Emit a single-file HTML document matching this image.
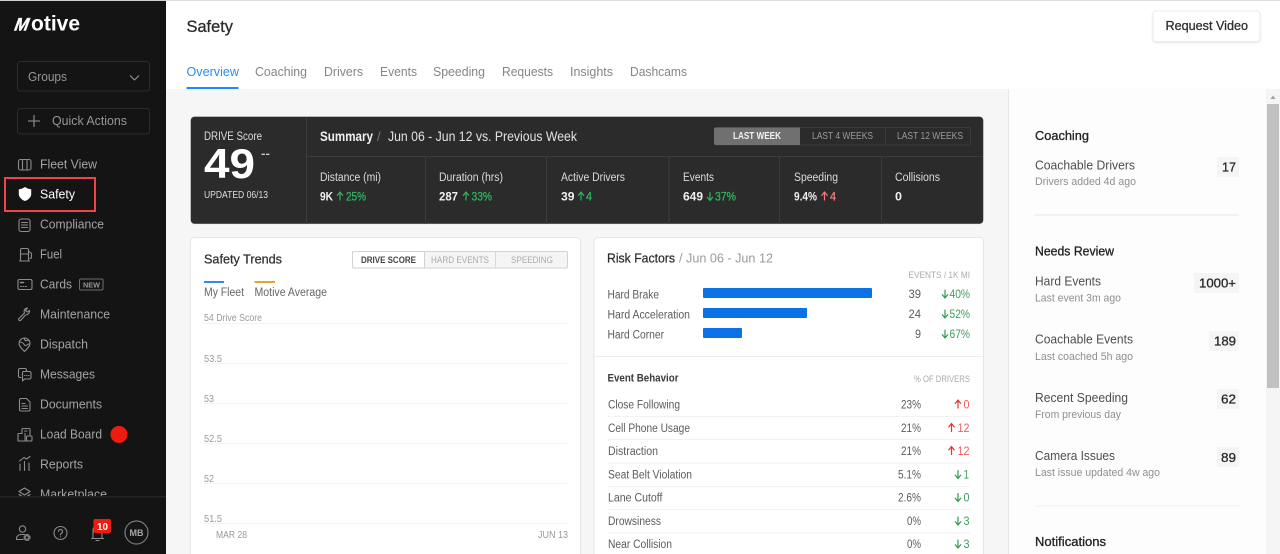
<!DOCTYPE html>
<html lang="en"><head><meta charset="utf-8"><title>Motive Safety</title>
<style>
html,body{margin:0;padding:0;width:1280px;height:554px;overflow:hidden;background:#f6f6f6}
svg{display:block}
text{font-family:"Liberation Sans",sans-serif;white-space:pre}
.n{font-size:13px;fill:#a3a3a3}
.i{fill:none;stroke:#8c8c8c;stroke-width:1.1;stroke-linejoin:round;stroke-linecap:round}
.tab{font-size:13px;fill:#858585}
.lb{font-size:11.5px;fill:#dcdcdc}
.v{font-size:12px;font-weight:bold;fill:#f0f0f0}
.g{font-size:12px;fill:#2db55d;stroke:#2db55d;stroke-width:.3}
.ax{font-size:10.5px;fill:#999}
.r{font-size:11.5px;fill:#5c5c5c}
.num{font-size:11.5px;fill:#5c5c5c}
.pg{font-size:11.5px;fill:#3f9a5c}
.pr{font-size:11.5px;fill:#f25c5c}
.h{font-size:13px;fill:#222;stroke:#222;stroke-width:.3}
.t{font-size:13px;fill:#4d4d4d}
.s{font-size:11px;fill:#8f8f8f}
.b{font-size:13px;fill:#2a2a2a;stroke:#2a2a2a;stroke-width:.3}
.ag{fill:none;stroke:#2f9a50;stroke-width:1.2}
.ar{fill:none;stroke:#ee3030;stroke-width:1.2}
.ad{fill:none;stroke:#2db55d;stroke-width:1.2}
.au{fill:none;stroke:#f47a7a;stroke-width:1.2}
</style></head><body>
<svg xmlns="http://www.w3.org/2000/svg" width="1280" height="554" viewBox="0 0 1280 554">
<defs>
<path id="up" d="M-3 3.2L0-.4L3 3.2M0-.4V8"/>
<path id="dn" d="M-3 4.4L0 8L3 4.4M0 8V-.4"/>
</defs>
<rect width="1280" height="554" fill="#f6f6f6"/>

<!-- header -->
<rect x="166" width="1114" height="89" fill="#fff"/>
<rect width="1280" height="1" fill="#dedede"/>
<text x="186.500" y="32" font-size="17" fill="#2b2b2b" stroke="#2b2b2b" stroke-width=".3" textLength="46.500" lengthAdjust="spacingAndGlyphs">Safety</text>
<text class="tab" x="186.500" y="76" style="fill:#2a8cf0" textLength="52.500" lengthAdjust="spacingAndGlyphs">Overview</text>
<text class="tab" x="255" y="76" textLength="52" lengthAdjust="spacingAndGlyphs">Coaching</text>
<text class="tab" x="324" y="76" textLength="39" lengthAdjust="spacingAndGlyphs">Drivers</text>
<text class="tab" x="380" y="76" textLength="37" lengthAdjust="spacingAndGlyphs">Events</text>
<text class="tab" x="433" y="76" textLength="52" lengthAdjust="spacingAndGlyphs">Speeding</text>
<text class="tab" x="502" y="76" textLength="51" lengthAdjust="spacingAndGlyphs">Requests</text>
<text class="tab" x="570" y="76" textLength="43" lengthAdjust="spacingAndGlyphs">Insights</text>
<text class="tab" x="630" y="76" textLength="57" lengthAdjust="spacingAndGlyphs">Dashcams</text>
<rect x="186.500" y="87" width="52" height="2" fill="#1a8cff"/>
<rect x="1153" y="11" width="107" height="30.500" rx="3" fill="#fff" stroke="#ececec" style="filter:drop-shadow(0 1px 1px rgba(0,0,0,.1))"/>
<text x="1165.500" y="30" font-size="13" fill="#2f2f2f" stroke="#2f2f2f" stroke-width=".3" textLength="82.500" lengthAdjust="spacingAndGlyphs">Request Video</text>

<!-- right panel -->
<rect x="1008" y="89" width="258" height="465" fill="#fdfdfd"/>
<rect x="1008" y="89" width="1" height="465" fill="#e8e8e8"/>
<rect x="1266" y="89" width="14" height="465" fill="#f5f5f5"/>
<rect x="1267" y="104" width="12" height="284" fill="#c1c1c1"/>
<path d="M1270.500 99L1273 95.500L1275.500 99Z" fill="#a0a0a0"/>
<text class="h" x="1035" y="140" textLength="54" lengthAdjust="spacingAndGlyphs">Coaching</text>
<text class="t" x="1035" y="169.500" textLength="100" lengthAdjust="spacingAndGlyphs">Coachable Drivers</text>
<text class="s" x="1035" y="185" textLength="101" lengthAdjust="spacingAndGlyphs">Drivers added 4d ago</text>
<rect x="1217" y="157" width="22" height="20" rx="1" fill="#f5f5f5"/>
<text class="b" x="1222" y="171.500" textLength="14" lengthAdjust="spacingAndGlyphs">17</text>
<rect x="1035" y="214.500" width="204" height="1" fill="#e6e6e6"/>
<text class="h" x="1035" y="255.500" textLength="79" lengthAdjust="spacingAndGlyphs">Needs Review</text>
<text class="t" x="1035" y="285.500" textLength="66" lengthAdjust="spacingAndGlyphs">Hard Events</text>
<text class="s" x="1035" y="301.500" textLength="86" lengthAdjust="spacingAndGlyphs">Last event 3m ago</text>
<rect x="1194" y="273" width="45" height="20" rx="1" fill="#f5f5f5"/>
<text class="b" x="1199" y="287.500" textLength="37" lengthAdjust="spacingAndGlyphs">1000+</text>
<text class="t" x="1035" y="343.500" textLength="98" lengthAdjust="spacingAndGlyphs">Coachable Events</text>
<text class="s" x="1035" y="360" textLength="98" lengthAdjust="spacingAndGlyphs">Last coached 5h ago</text>
<rect x="1209" y="331" width="30" height="20" rx="1" fill="#f5f5f5"/>
<text class="b" x="1214" y="345.500" textLength="22" lengthAdjust="spacingAndGlyphs">189</text>
<text class="t" x="1035" y="402" textLength="93" lengthAdjust="spacingAndGlyphs">Recent Speeding</text>
<text class="s" x="1035" y="418" textLength="86" lengthAdjust="spacingAndGlyphs">From previous day</text>
<rect x="1217" y="389" width="22" height="20" rx="1" fill="#f5f5f5"/>
<text class="b" x="1221" y="403.500" textLength="15" lengthAdjust="spacingAndGlyphs">62</text>
<text class="t" x="1035" y="460" textLength="80" lengthAdjust="spacingAndGlyphs">Camera Issues</text>
<text class="s" x="1035" y="476" textLength="125" lengthAdjust="spacingAndGlyphs">Last issue updated 4w ago</text>
<rect x="1217" y="447" width="22" height="20" rx="1" fill="#f5f5f5"/>
<text class="b" x="1221" y="462" textLength="15" lengthAdjust="spacingAndGlyphs">89</text>
<rect x="1035" y="505.500" width="204" height="1" fill="#eeeeee"/>
<text class="h" x="1035" y="546" textLength="71" lengthAdjust="spacingAndGlyphs">Notifications</text>

<!-- summary card -->
<rect x="190.500" y="116.500" width="793" height="107.500" rx="4" fill="#2b2b2b" stroke="#dcdcdc" stroke-width=".6"/>
<path d="M306.500 117V224M306 156.500H983M425.500 157V224M546.500 157V224M669 157V224M779.500 157V224M881.500 157V224" stroke="#3c3c3c" fill="none"/>
<text x="204" y="140" font-size="11.500" fill="#ddd" textLength="58" lengthAdjust="spacingAndGlyphs">DRIVE Score</text>
<text x="204" y="178" font-size="42" font-weight="bold" fill="#fff" textLength="51" lengthAdjust="spacingAndGlyphs">49</text>
<text x="261" y="157" font-size="11" font-weight="bold" fill="#ccc" textLength="9" lengthAdjust="spacingAndGlyphs">--</text>
<text x="204" y="198" font-size="10.500" fill="#ddd" textLength="64" lengthAdjust="spacingAndGlyphs">UPDATED 06/13</text>
<text x="320" y="141" font-size="13.500" font-weight="bold" fill="#f0f0f0" textLength="53" lengthAdjust="spacingAndGlyphs">Summary</text>
<text x="377" y="141" font-size="13" fill="#777">/</text>
<text x="388" y="141" font-size="13.500" fill="#e2e2e2" textLength="189" lengthAdjust="spacingAndGlyphs">Jun 06 - Jun 12 vs. Previous Week</text>
<rect x="714.500" y="127.500" width="256" height="17.500" rx="2" fill="#2b2b2b" stroke="#3a3a3a"/>
<path d="M714 129.500a2 2 0 0 1 2-2H800V145H716a2 2 0 0 1-2-2Z" fill="#707070"/>
<path d="M885.500 128V145" stroke="#3a3a3a"/>
<text x="733" y="139" font-size="10" font-weight="bold" fill="#f2f2f2" textLength="48" lengthAdjust="spacingAndGlyphs">LAST WEEK</text>
<text x="812" y="139" font-size="10" fill="#9a9a9a" textLength="61" lengthAdjust="spacingAndGlyphs">LAST 4 WEEKS</text>
<text x="897" y="139" font-size="10" fill="#9a9a9a" textLength="66" lengthAdjust="spacingAndGlyphs">LAST 12 WEEKS</text>
<text class="lb" x="320" y="181" textLength="61" lengthAdjust="spacingAndGlyphs">Distance (mi)</text>
<text class="lb" x="439" y="181" textLength="64" lengthAdjust="spacingAndGlyphs">Duration (hrs)</text>
<text class="lb" x="561" y="181" textLength="64" lengthAdjust="spacingAndGlyphs">Active Drivers</text>
<text class="lb" x="683" y="181" textLength="31" lengthAdjust="spacingAndGlyphs">Events</text>
<text class="lb" x="794" y="181" textLength="44" lengthAdjust="spacingAndGlyphs">Speeding</text>
<text class="lb" x="895" y="181" textLength="45" lengthAdjust="spacingAndGlyphs">Collisions</text>
<text class="v" x="320" y="200.500" textLength="13" lengthAdjust="spacingAndGlyphs">9K</text>
<use href="#up" class="ad" x="340" y="192.500"/>
<text class="g" x="346" y="200.500" textLength="20" lengthAdjust="spacingAndGlyphs">25%</text>
<text class="v" x="439" y="200.500" textLength="19" lengthAdjust="spacingAndGlyphs">287</text>
<use href="#up" class="ad" x="466" y="192.500"/>
<text class="g" x="471.500" y="200.500" textLength="20.500" lengthAdjust="spacingAndGlyphs">33%</text>
<text class="v" x="561" y="200.500" textLength="13.500" lengthAdjust="spacingAndGlyphs">39</text>
<use href="#up" class="ad" x="581" y="192.500"/>
<text class="g" x="586" y="200.500" textLength="6" lengthAdjust="spacingAndGlyphs">4</text>
<text class="v" x="683" y="200.500" textLength="20" lengthAdjust="spacingAndGlyphs">649</text>
<use href="#dn" class="ad" x="710" y="192.500"/>
<text class="g" x="715" y="200.500" textLength="21" lengthAdjust="spacingAndGlyphs">37%</text>
<text class="v" x="794" y="200.500" textLength="23" lengthAdjust="spacingAndGlyphs">9.4%</text>
<use href="#up" class="au" x="824.500" y="192.500"/>
<text class="g" style="fill:#f47a7a;stroke:#f47a7a" x="830" y="200.500" textLength="6" lengthAdjust="spacingAndGlyphs">4</text>
<text class="v" x="895" y="200.500" textLength="7" lengthAdjust="spacingAndGlyphs">0</text>

<!-- safety trends -->
<rect x="190.500" y="237.500" width="390" height="330" rx="4" fill="#fff" stroke="#e6e6e6"/>
<text x="204" y="263.500" font-size="13" fill="#2f2f2f" stroke="#2f2f2f" stroke-width=".25" textLength="78" lengthAdjust="spacingAndGlyphs">Safety Trends</text>
<rect x="352.500" y="251.500" width="215" height="16.500" rx="1.500" fill="#f5f5f5" stroke="#d2d2d2"/>
<rect x="352.500" y="251.500" width="72" height="16.500" rx="1.500" fill="#fff" stroke="#d2d2d2"/>
<path d="M495.500 252V268" stroke="#d8d8d8"/>
<text x="361" y="263" font-size="9.500" font-weight="bold" fill="#444" textLength="55" lengthAdjust="spacingAndGlyphs">DRIVE SCORE</text>
<text x="431" y="263" font-size="9.500" fill="#aaa" textLength="58" lengthAdjust="spacingAndGlyphs">HARD EVENTS</text>
<text x="511" y="263" font-size="9.500" fill="#aaa" textLength="42" lengthAdjust="spacingAndGlyphs">SPEEDING</text>
<rect x="204" y="281" width="20" height="2" fill="#2a8cf0"/>
<rect x="254.500" y="281" width="20.500" height="2" fill="#e8a427"/>
<text x="204" y="296" font-size="11.500" fill="#666" textLength="40" lengthAdjust="spacingAndGlyphs">My Fleet</text>
<text x="254.500" y="296" font-size="11.500" fill="#666" textLength="72.500" lengthAdjust="spacingAndGlyphs">Motive Average</text>
<path d="M204 323.500H567M204 363.500H567M204 403.500H567M204 443.500H567M204 483.500H567M204 523.500H567" stroke="#f2f2f2"/>
<text class="ax" x="204" y="321" textLength="58" lengthAdjust="spacingAndGlyphs" style="font-size:10px">54 Drive Score</text>
<text class="ax" x="204" y="362" textLength="18" lengthAdjust="spacingAndGlyphs">53.5</text>
<text class="ax" x="204" y="402" textLength="10" lengthAdjust="spacingAndGlyphs">53</text>
<text class="ax" x="204" y="442" textLength="18" lengthAdjust="spacingAndGlyphs">52.5</text>
<text class="ax" x="204" y="482" textLength="10" lengthAdjust="spacingAndGlyphs">52</text>
<text class="ax" x="204" y="522" textLength="18" lengthAdjust="spacingAndGlyphs">51.5</text>
<text class="ax" x="216" y="538" textLength="31" lengthAdjust="spacingAndGlyphs">MAR 28</text>
<text class="ax" x="538" y="538" textLength="30" lengthAdjust="spacingAndGlyphs">JUN 13</text>

<!-- risk factors -->
<rect x="594" y="237.500" width="389.500" height="330" rx="4" fill="#fff" stroke="#e6e6e6"/>
<text x="607" y="262.500" font-size="13" fill="#2f2f2f" stroke="#2f2f2f" stroke-width=".25" textLength="68" lengthAdjust="spacingAndGlyphs">Risk Factors</text>
<text x="679" y="262.500" font-size="13" fill="#9a9a9a" textLength="94" lengthAdjust="spacingAndGlyphs">/ Jun 06 - Jun 12</text>
<text x="908.500" y="278" font-size="9.500" fill="#aaa" textLength="61.500" lengthAdjust="spacingAndGlyphs">EVENTS / 1K MI</text>
<text class="r" x="607.500" y="298.500" textLength="51.500" lengthAdjust="spacingAndGlyphs">Hard Brake</text>
<text class="r" x="607.500" y="318.500" textLength="82.500" lengthAdjust="spacingAndGlyphs">Hard Acceleration</text>
<text class="r" x="607.500" y="338.500" textLength="56.500" lengthAdjust="spacingAndGlyphs">Hard Corner</text>
<rect x="703" y="288" width="169" height="10" rx="1" fill="#0a72e6"/>
<rect x="703" y="308" width="104" height="10" rx="1" fill="#0a72e6"/>
<rect x="703" y="328" width="39" height="10" rx="1" fill="#0a72e6"/>
<text class="num" x="908.500" y="298" textLength="12.500" lengthAdjust="spacingAndGlyphs">39</text>
<text class="num" x="908.500" y="318" textLength="12.500" lengthAdjust="spacingAndGlyphs">24</text>
<text class="num" x="915" y="338" textLength="6" lengthAdjust="spacingAndGlyphs">9</text>
<use href="#dn" class="ag" x="945" y="290"/><text class="pg" x="949.500" y="298" textLength="20.500" lengthAdjust="spacingAndGlyphs">40%</text>
<use href="#dn" class="ag" x="945" y="310"/><text class="pg" x="949.500" y="318" textLength="20.500" lengthAdjust="spacingAndGlyphs">52%</text>
<use href="#dn" class="ag" x="945" y="330"/><text class="pg" x="949.500" y="338" textLength="20.500" lengthAdjust="spacingAndGlyphs">67%</text>
<path d="M594.500 356.500H983" stroke="#eee"/>
<text x="607.500" y="381.500" font-size="11" font-weight="bold" fill="#3a3a3a" textLength="71" lengthAdjust="spacingAndGlyphs">Event Behavior</text>
<text x="914" y="382" font-size="9.500" fill="#aaa" textLength="56" lengthAdjust="spacingAndGlyphs">% OF DRIVERS</text>
<path d="M608 416.500H970M608 439.500H970M608 463H970M608 486.500H970M608 509.500H970M608 533H970" stroke="#f2f2f2"/>
<text class="r" x="608" y="408.500" textLength="72" lengthAdjust="spacingAndGlyphs">Close Following</text>
<text class="r" x="608" y="432" textLength="82" lengthAdjust="spacingAndGlyphs">Cell Phone Usage</text>
<text class="r" x="608" y="455" textLength="50" lengthAdjust="spacingAndGlyphs">Distraction</text>
<text class="r" x="608" y="478.500" textLength="84" lengthAdjust="spacingAndGlyphs">Seat Belt Violation</text>
<text class="r" x="608" y="501.500" textLength="54.500" lengthAdjust="spacingAndGlyphs">Lane Cutoff</text>
<text class="r" x="608" y="525" textLength="53" lengthAdjust="spacingAndGlyphs">Drowsiness</text>
<text class="r" x="608" y="548" textLength="64" lengthAdjust="spacingAndGlyphs">Near Collision</text>
<text class="num" x="901" y="408.500" textLength="20" lengthAdjust="spacingAndGlyphs">23%</text>
<text class="num" x="901" y="432" textLength="20" lengthAdjust="spacingAndGlyphs">21%</text>
<text class="num" x="901" y="455" textLength="20" lengthAdjust="spacingAndGlyphs">21%</text>
<text class="num" x="898" y="478.500" textLength="23" lengthAdjust="spacingAndGlyphs">5.1%</text>
<text class="num" x="898" y="501.500" textLength="23" lengthAdjust="spacingAndGlyphs">2.6%</text>
<text class="num" x="907" y="525" textLength="14" lengthAdjust="spacingAndGlyphs">0%</text>
<text class="num" x="907" y="548" textLength="14" lengthAdjust="spacingAndGlyphs">0%</text>
<use href="#up" class="ar" x="958" y="400.500"/><text class="pr" x="963.500" y="408.500" textLength="6" lengthAdjust="spacingAndGlyphs">0</text>
<use href="#up" class="ar" x="951.500" y="424"/><text class="pr" x="957.500" y="432" textLength="12" lengthAdjust="spacingAndGlyphs">12</text>
<use href="#up" class="ar" x="951.500" y="447"/><text class="pr" x="957.500" y="455" textLength="12" lengthAdjust="spacingAndGlyphs">12</text>
<use href="#dn" class="ag" x="958" y="470.500"/><text class="pg" x="963.500" y="478.500" textLength="5.500" lengthAdjust="spacingAndGlyphs">1</text>
<use href="#dn" class="ag" x="958" y="493.500"/><text class="pg" x="963.500" y="501.500" textLength="6" lengthAdjust="spacingAndGlyphs">0</text>
<use href="#dn" class="ag" x="958" y="517"/><text class="pg" x="963.500" y="525" textLength="6" lengthAdjust="spacingAndGlyphs">3</text>
<use href="#dn" class="ag" x="958" y="540"/><text class="pg" x="963.500" y="548" textLength="6" lengthAdjust="spacingAndGlyphs">3</text>

<!-- sidebar -->
<rect width="166" height="554" fill="#141414"/>
<rect width="166" height="1" fill="#cfcfcf"/>
<g transform="translate(13 30.500) skewX(-20)"><text x="0" y="0" font-size="18" font-weight="bold" fill="#fff" stroke="#fff" stroke-width=".4" textLength="14" lengthAdjust="spacingAndGlyphs">M</text></g>
<text x="31" y="30.500" font-size="21.500" font-weight="bold" fill="#fff" textLength="49" lengthAdjust="spacingAndGlyphs">otive</text>
<rect x="17.500" y="61.500" width="132" height="29.500" rx="3" fill="none" stroke="#2c2c2c"/>
<text class="n" x="28" y="81" style="fill:#969696" textLength="39" lengthAdjust="spacingAndGlyphs">Groups</text>
<path d="M130 75.500L134.500 80L139 75.500" fill="none" stroke="#969696" stroke-width="1.100"/>
<rect x="17.500" y="108.500" width="132" height="25.500" rx="3" fill="none" stroke="#2c2c2c"/>
<path d="M28 121H40M34 115V127" stroke="#969696" stroke-width="1.100"/>
<text class="n" x="52" y="125" style="fill:#969696" textLength="75" lengthAdjust="spacingAndGlyphs">Quick Actions</text>

<text class="n" x="40" y="168.500" textLength="57" lengthAdjust="spacingAndGlyphs">Fleet View</text>
<text class="n" x="40" y="198.500" style="fill:#fff" textLength="35" lengthAdjust="spacingAndGlyphs">Safety</text>
<text class="n" x="40" y="228.500" textLength="64" lengthAdjust="spacingAndGlyphs">Compliance</text>
<text class="n" x="40" y="258.500" textLength="22" lengthAdjust="spacingAndGlyphs">Fuel</text>
<text class="n" x="40" y="288.500" textLength="32" lengthAdjust="spacingAndGlyphs">Cards</text>
<text class="n" x="40" y="318.500" textLength="70" lengthAdjust="spacingAndGlyphs">Maintenance</text>
<text class="n" x="40" y="348.500" textLength="48" lengthAdjust="spacingAndGlyphs">Dispatch</text>
<text class="n" x="40" y="378.500" textLength="55" lengthAdjust="spacingAndGlyphs">Messages</text>
<text class="n" x="40" y="408.500" textLength="62" lengthAdjust="spacingAndGlyphs">Documents</text>
<text class="n" x="40" y="438.500" textLength="62" lengthAdjust="spacingAndGlyphs">Load Board</text>
<text class="n" x="40" y="468.500" textLength="43" lengthAdjust="spacingAndGlyphs">Reports</text>
<text class="n" x="40" y="498.500" textLength="67" lengthAdjust="spacingAndGlyphs">Marketplace</text>

<rect x="79.500" y="279" width="23.500" height="11" rx="1.500" fill="none" stroke="#6e6e6e"/>
<text x="83" y="287.500" font-size="7.500" font-weight="bold" fill="#999" textLength="17" lengthAdjust="spacingAndGlyphs">NEW</text>
<circle cx="119" cy="434.500" r="8.500" fill="#ee1c0e"/>

<!-- nav icons -->
<g class="i">
<path d="M18.500 161.500a2 2 0 0 1 2-2L24.500 159.500L27 159.500H29a2 2 0 0 1 2 2V168a2 2 0 0 1-2 2L27 170H21H20.500a2 2 0 0 1-2-2ZM22.500 159.500V170M27 159.500V170"/>
<rect x="19" y="219" width="11" height="12.500" rx="2"/><path d="M21.500 222.500H27.500M21.500 225H27.500M21.500 227.500H27.500"/>
<path d="M20.500 261V250a1.500 1.500 0 0 1 1.500-1.500H27a1.500 1.500 0 0 1 1.500 1.500V261M19.500 261H29.500M20.500 254H28.500M28.500 251L31.500 253.500V258L30 258.500"/>
<rect x="18" y="279.500" width="14" height="10" rx="1.500"/><path d="M20.500 282.500H23.500" stroke-width="1.500"/><path d="M20.500 286.500H21.500M23 286.500H24M25.500 286.500H26.500"/>
<path d="M19 318.500L24.500 313a4 4 0 0 1 1-4.500L27.500 308L25.500 310.500L27 312L29.500 310.500a4 4 0 0 1-4 4.500L20.500 320.500C19 321 18 319.500 19 318.500Z"/>
<path d="M24.500 351.500C21 348 19 345.800 19 343.500a5.500 5.500 0 0 1 11 0C30 345.800 28 348 24.500 351.500ZM20 342C23 342 23.500 344 25 345.500C27 346 27 344 29 344M24.500 338.500C24 340.500 26 341 28 340.500"/>
<path d="M26.500 371.500V370a1.500 1.500 0 0 0-1.500-1.500H20a1.500 1.500 0 0 0-1.500 1.500V376a1.500 1.500 0 0 0 1.500 1.500H21"/>
<path d="M23 371.500H29.500a1.500 1.500 0 0 1 1.500 1.500V377.500a1.500 1.500 0 0 1-1.500 1.500H24.500L22.500 381V373a1.500 1.500 0 0 1 .5-1.500Z"/><path d="M24.500 375.500H25M26.500 375.500H27M28.500 375.500H29"/>
<path d="M19.500 400a1.500 1.500 0 0 1 1.500-1.500H26.500L30 402V409.500a1.500 1.500 0 0 1-1.500 1.500H21a1.500 1.500 0 0 1-1.500-1.500ZM22 403.500H25M22 406H27.500M22 408.500H27.500"/>
<path d="M18 441V434.500a1 1 0 0 1 1-1H22V429.500a1 1 0 0 1 1-1H29a1 1 0 0 1 1 1V435M18 441H30.500M25 433.500V441M24.500 431H27"/><rect x="26.500" y="436" width="5.500" height="5" rx="1"/>
<path d="M20 470.500V464M24.500 470.500V461.500M29 470.500V463M19.500 461L24 457.500L26.500 459L30 456.500"/>
<path d="M24.500 488L30 491.500L24.500 495L19 491.500ZM19 494.500L24.500 498L30 494.500"/>
</g>
<path d="M25 187C22.500 188.600 20.500 189.200 18.800 189.200V194C18.800 197 21.500 199.800 25 201C28.500 199.800 31.200 197 31.200 194V189.200C29.500 189.200 27.500 188.600 25 187Z" fill="#fff"/>
<rect x="5" y="178" width="90" height="33" fill="none" stroke="#ef4349" stroke-width="2"/>

<!-- footer -->
<rect y="497" width="166" height="57" fill="#141414"/>
<rect y="496" width="166" height="1.500" fill="#242424"/>
<g class="i">
<circle cx="22.500" cy="529" r="3.200"/>
<path d="M16.500 539.500V538a4.500 4.500 0 0 1 4.500-3.500H24.500M16.500 539.500H23"/>
<circle cx="27" cy="537.500" r="1.800"/><circle cx="27" cy="537.500" r="3" stroke-dasharray="1.200 1.200"/>
<circle cx="60.500" cy="533" r="6.500"/>
<path d="M58.500 531.500a2 2 0 1 1 3 1.700C60.800 533.700 60.500 534 60.500 535M60.500 536.800V537"/>
<path d="M93 538V530a4.500 4.500 0 0 1 9 0V538M91.500 538.500H103.500M96 540.500H99"/>
</g>
<rect x="93.500" y="519" width="17.500" height="14" rx="2" fill="#ee1c0e"/>
<text x="97" y="530" font-size="10.500" font-weight="bold" fill="#fff" textLength="11" lengthAdjust="spacingAndGlyphs">10</text>
<circle cx="136.500" cy="532.500" r="11.500" fill="none" stroke="#7a7a7a" stroke-width="1.200"/>
<text x="129.500" y="536" font-size="9.500" font-weight="bold" fill="#a8a8a8" textLength="14" lengthAdjust="spacingAndGlyphs">MB</text>
</svg>
</body></html>
